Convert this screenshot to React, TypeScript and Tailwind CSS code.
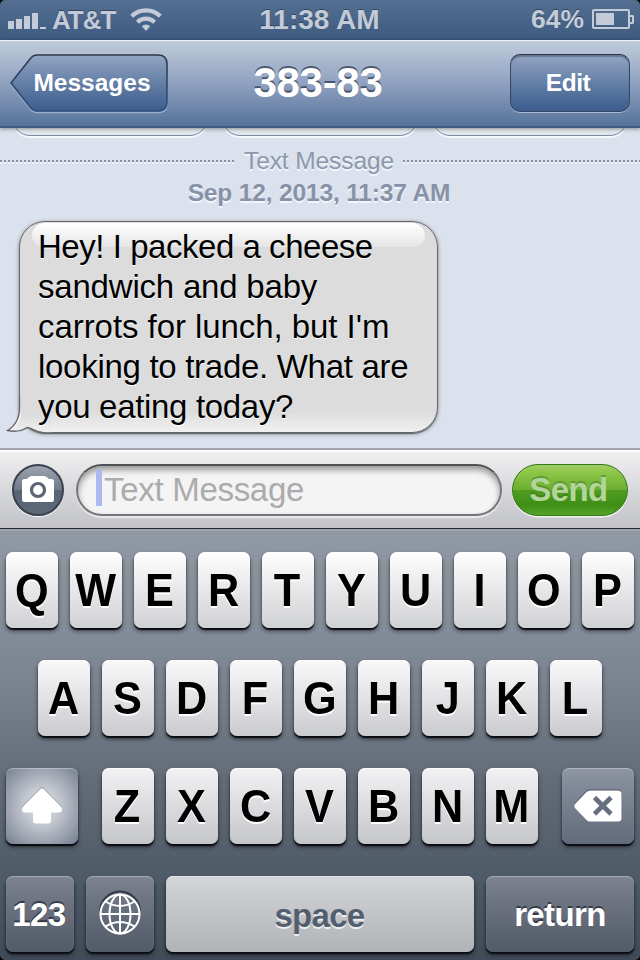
import React from "react";
import clsx from "clsx";

const lightKey =
  "h-[76px] w-[52px] rounded-[7px] flex items-center justify-center pr-px font-bold text-[46px] leading-none text-black [text-shadow:0_2px_0_#fff] shadow-[0_2px_1px_#0a0c10,0_3px_4px_rgba(0,0,0,0.55),inset_0_1px_0_rgba(255,255,255,0.7)] bg-linear-to-b";

const darkKey =
  "h-[76px] rounded-[7px] flex items-center justify-center font-bold text-[33px] tracking-[-0.6px] leading-none text-white [text-shadow:0_-2px_0_rgba(30,35,45,0.7)] shadow-[0_2px_1px_#0a0c10,0_3px_4px_rgba(0,0,0,0.55),inset_0_1px_1px_rgba(255,255,255,0.35)] bg-linear-to-b";

const Letters = ({ letters, tone }: { letters: string; tone: string }) => (
  <>
    {letters.split("").map((letter) => (
      <button key={letter} className={clsx(lightKey, tone)}>
        <span className="scale-x-[0.94]">{letter}</span>
      </button>
    ))}
  </>
);

const StatusBar = () => {
  return (
    <div className="h-10 flex items-center justify-between bg-linear-to-b from-[#546f91] to-[#3d5a80] text-[#c2cbd7] font-bold px-[6px] pl-2 [text-shadow:0_-1px_0_rgba(30,45,70,0.6)]">
      <div className="w-[220px] flex items-center">
        <div className="flex items-end gap-[2px] h-4 mt-[2px]">
          <span className="w-[6px] h-2 bg-[#c2cbd7]" />
          <span className="w-[6px] h-[10px] bg-[#c2cbd7]" />
          <span className="w-[6px] h-[13px] bg-[#c2cbd7]" />
          <span className="w-[6px] h-4 bg-[#c2cbd7]" />
          <span className="w-[6px] h-[2px] bg-[#c2cbd7]" />
        </div>
        <span className="ml-[6px] w-[63px] text-[26px] tracking-[-1px] whitespace-nowrap">AT&amp;T</span>
        <svg className="ml-[15px] mt-[-2px]" width="32" height="24" viewBox="0 0 32 24" fill="none" stroke="#c2cbd7" strokeWidth="4.2">
          <path d="M1.7 9.2a20.5 20.5 0 0 1 28.6 0" />
          <path d="M7.4 15.2a12.3 12.3 0 0 1 17.2 0" />
          <path d="M16 24l-4.2-4.8a6.2 6.2 0 0 1 8.4 0z" fill="#c2cbd7" stroke="none" />
        </svg>
      </div>
      <span className="ml-[-3px] text-[28px] whitespace-nowrap">11:38 AM</span>
      <div className="w-[220px] flex items-center justify-end">
        <span className="text-[26.5px] mr-[8px]">64%</span>
        <div className="w-[38px] h-5 border-2 border-[#c2cbd7] rounded-[2px] p-[2px] mt-[-2px]">
          <div className="w-[18px] h-3 bg-[#c2cbd7]" />
        </div>
        <div className="w-1 h-[9px] border-2 border-l-0 border-[#c2cbd7] rounded-r-[2px] mt-[-2px]" />
      </div>
    </div>
  );
};

const NavBar = () => {
  return (
    <div className="relative z-10 h-[88px] flex items-center justify-between pl-[10px] pr-[10px] pb-[2px] bg-linear-to-b from-[#c0ccdc] via-[#8fa1bf] to-[#56739a] border-t border-t-[#eef2f7] border-b-2 border-b-[#3c5a84] shadow-[0_1px_4px_rgba(0,0,0,0.4)] text-white font-bold [text-shadow:0_-2px_0_rgba(50,60,80,0.75)]">
      <button className="relative w-[158px] h-[58px] pl-[6px] pt-[2px] flex items-center justify-center text-[24.5px]">
        <svg className="absolute inset-0 overflow-visible" width="158" height="58" viewBox="0 0 158 58">
          <defs>
            <linearGradient id="back" x1="0" y1="0" x2="0" y2="1">
              <stop offset="0" stopColor="#93a5c2" />
              <stop offset="0.5" stopColor="#647fa7" />
              <stop offset="1" stopColor="#3b5c8d" />
            </linearGradient>
            <linearGradient id="backEdge" x1="0" y1="0" x2="0" y2="1">
              <stop offset="0" stopColor="#30394b" />
              <stop offset="1" stopColor="#304e7d" />
            </linearGradient>
          </defs>
          <path
            d="M27 1H148Q157 1 157 10V48Q157 57 148 57H27Q23 57 20 53L1 29L20 5Q23 1 27 1Z"
            fill="none"
            stroke="#a9bbd3"
            strokeOpacity="0.8"
            strokeWidth="1.5"
            transform="translate(0 1.5)"
          />
          <path
            d="M27 1H148Q157 1 157 10V48Q157 57 148 57H27Q23 57 20 53L1 29L20 5Q23 1 27 1Z"
            fill="url(#back)"
            stroke="url(#backEdge)"
            strokeWidth="1.6"
          />
        </svg>
        <span className="relative">Messages</span>
      </button>
      <h1 className="text-[42px] tracking-[-0.3px] leading-none ml-[-42px]">383-83</h1>
      <button className="w-[120px] h-[58px] pr-1 pt-[2px] rounded-[10px] border border-[#34496b] border-t-[#2e384a] bg-linear-to-b from-[#93a5c2] via-[#647fa7] to-[#3b5c8d] shadow-[0_1px_0_#a9bbd3,inset_0_2px_1px_rgba(40,50,70,0.4)] text-[24.5px] tracking-[-0.5px]">
        Edit
      </button>
    </div>
  );
};

const dots =
  "h-1 mt-[2px] bg-[linear-gradient(#828ca3_0_50%,#f2f5fa_50%)] [mask-image:repeating-linear-gradient(90deg,#000_0_2px,transparent_2px_4px)]";

const Conversation = () => {
  return (
    <div className="relative h-80 bg-[#dbe1ed] overflow-hidden">
      <div className="flex gap-[14px] pl-3 h-[17px]">
        {[0, 1, 2].map((item) => (
          <div
            key={item}
            className="shrink-0 mt-[-28px] w-[196px] h-9 rounded-[20px] border border-[#7b899f] bg-[#e4e8ee] shadow-[0_2px_0_#f4f7fb]"
          />
        ))}
      </div>
      <div className="h-8 flex items-center text-[24.5px] text-[#8d97ab] [text-shadow:0_2px_0_#f2f5fa]">
        <div className={clsx("w-[235px]", dots)} />
        <span className="w-[168px] text-center whitespace-nowrap tracking-[-0.1px]">Text Message</span>
        <div className={clsx("flex-1", dots)} />
      </div>
      <p className="h-8 pr-[2px] leading-8 text-center text-[24.5px] tracking-[-0.15px] font-bold text-[#8792a7] [text-shadow:0_2px_0_#f2f5fa]">
        Sep 12, 2013, 11:37 AM
      </p>
      <div className="relative ml-[19px] mt-3 w-[419px] h-[212px] rounded-[26px] border border-[#66676a] bg-[linear-gradient(#dcdcdc_0_90%,#f1f1f1)] shadow-[0_1px_1px_rgba(60,60,65,0.7),0_1px_4px_rgba(0,0,0,0.35)]">
        <div className="absolute left-3 right-3 top-px h-6 rounded-t-[16px] rounded-b-[14px] bg-linear-to-b from-white to-[#e5e5e5]" />
        <svg className="absolute left-[-15px] top-[171px]" width="46" height="42" viewBox="0 0 46 42">
          <defs>
            <linearGradient id="tail" x1="0" y1="0" x2="0" y2="1">
              <stop offset="0.5" stopColor="#dcdcdc" />
              <stop offset="1" stopColor="#f1f1f1" />
            </linearGradient>
          </defs>
          <path d="M14.500 4V14C14.500 26 10 33 2.500 37.500C10 39 17 38 22 34.500C28 35 30 39.800 40 39.800H46V4Z" fill="url(#tail)" />
          <path d="M6 36.500C12 33 15 28 16 20" fill="none" stroke="#f5f5f5" strokeOpacity="0.8" strokeWidth="1.500" />
          <path
            d="M14.500 4V14C14.500 26 10 33 2.500 37.500C10 39 17 38 22 34.500C28 35 30 39.700 40 39.800H46"
            fill="none"
            stroke="#66676a"
            strokeWidth="1.300"
          />
        </svg>
        <p className="relative pl-[18px] pt-[5px] text-[33px] leading-10 text-black [text-shadow:0_1px_0_#fff] whitespace-nowrap">
          <span className="tracking-[-0.46px]">Hey! I packed a cheese</span>
          <br />
          <span className="tracking-[-0.2px]">sandwich and baby</span>
          <br />
          <span className="tracking-[-0.06px]">carrots for lunch, but I'm</span>
          <br />
          <span className="tracking-[-0.29px]">looking to trade. What are</span>
          <br />
          <span className="tracking-[-0.32px]">you eating today?</span>
        </p>
      </div>
    </div>
  );
};

const Composer = () => {
  return (
    <div className="relative h-[81px] flex items-start pt-[13px] px-3 bg-linear-to-b from-[#f0f0f1] to-[#c2c3c8] border-t-2 border-t-[#a4a7ae] border-b border-b-[#26292e] shadow-[inset_0_2px_0_#fff]">
      <button className="mt-px w-[52px] h-[52px] rounded-full border-2 border-[#39424e] bg-[linear-gradient(#9ba3af_0%,#707b89_50%,#596574_50%,#5b6877_100%)] shadow-[0_1px_1px_#fff]">
        <svg className="m-[-2px]" width="52" height="52" viewBox="0 0 52 52">
          <path
            d="M12.500 15H14Q15.500 15 16.500 13.500Q18 12 20 12H32Q34 12 35.500 13.500Q36.500 15 38 15H39.500Q42 15 42 17.500V35.500Q42 38 39.500 38H12.500Q10 38 10 35.500V17.500Q10 15 12.500 15Z"
            fill="#fff"
          />
          <circle cx="26" cy="26" r="6.500" fill="#fff" stroke="#5b6675" strokeWidth="3.200" />
        </svg>
      </button>
      <div className="ml-3 mt-px w-[426px] h-[52px] rounded-full border-2 border-[#747578] border-t-[#505154] bg-[#f4f4f4] shadow-[0_2px_1px_#ebebec,inset_0_4px_6px_rgba(0,0,0,0.38)] flex items-center pl-[18px] pb-1">
        <span className="w-[6px] h-9 bg-[#adbaf1]" />
        <span className="pl-[2px] mt-[2px] text-[33px] leading-none tracking-[-0.3px] text-[#ababab]">Text Message</span>
      </div>
      <button className="ml-[10px] mt-px w-[116px] h-[52px] pr-[3px] pb-[2px] rounded-full border-[1.5px] border-[#327a17] bg-[linear-gradient(#a0cb66_0%,#8cc647_15%,#6cae32_49%,#509d20_50%,#3f8e15_80%,#57a32b_100%)] shadow-[0_1.5px_0_#f3f3f3] font-bold text-[33px] tracking-[-0.6px] leading-none text-[#b2d59c] [text-shadow:0_-2px_0_rgba(60,110,30,0.45)]">
        Send
      </button>
    </div>
  );
};

const Keyboard = () => {
  return (
    <div className="h-[431px] px-[6px] pt-[23px] flex flex-col gap-8 bg-[linear-gradient(#9199a5,#7c8491_35%,#68727e_52%,#525d6a_77%,#404b5a)] shadow-[inset_0_2px_0_#9ea5b0]">
      <div className="flex gap-3">
        <Letters letters="QWERTYUIOP" tone="from-[#fefefe] to-[#d0d1d4]" />
      </div>
      <div className="flex gap-3 justify-center">
        <Letters letters="ASDFGHJKL" tone="from-[#f9f9fa] to-[#cbccd0]" />
      </div>
      <div className="flex justify-between">
        <button className="w-[72px] h-[76px] rounded-[7px] flex items-center justify-center bg-[radial-gradient(ellipse_at_center,#e4e6ea_0%,#c3c7cf_35%,#9aa0ad_70%,#747d8e_100%)] shadow-[0_2px_1px_#0a0c10,0_3px_4px_rgba(0,0,0,0.55),inset_0_1px_1px_rgba(255,255,255,0.35)]">
          <svg width="42" height="38" viewBox="0 0 42 38">
            <path
              d="M19.300 2Q21 .300 22.700 2L39.500 19Q41 20.500 41 22.500Q41 25.500 38 25.500H30V33.500Q30 36.500 27 36.500H15Q12 36.500 12 33.500V25.500H4Q1 25.500 1 22.500Q1 20.500 2.500 19Z"
              fill="#fff"
              className="drop-shadow-[0_-1px_0_rgba(90,95,110,0.5)]"
            />
          </svg>
        </button>
        <div className="flex gap-3">
          <Letters letters="ZXCVBNM" tone="from-[#f2f2f4] to-[#c5c6ca]" />
        </div>
        <button className={clsx(darkKey, "w-[72px] from-[#8d94a2] to-[#626b7b]")}>
          <svg width="50" height="36" viewBox="0 0 50 36">
            <path
              d="M17 2.500H45Q48.500 2.500 48.500 6V30Q48.500 33.500 45 33.500H17Q15 33.500 13.500 32L2 20Q.500 18 2 16L13.500 4Q15 2.500 17 2.500Z"
              fill="#fff"
              className="drop-shadow-[0_-1px_0_rgba(50,55,70,0.7)]"
            />
            <path d="M21.500 9.500L38 26M38 9.500L21.500 26" stroke="#666e7f" strokeWidth="4.600" />
          </svg>
        </button>
      </div>
      <div className="flex gap-3">
        <button className={clsx(darkKey, "w-[68px] from-[#7c828e] to-[#525967]")}>
          <span className="ml-[-2px]">123</span>
        </button>
        <button className={clsx(darkKey, "w-[68px] from-[#7c828e] to-[#525967]")}>
          <svg className="overflow-visible" width="42" height="42" viewBox="0 0 42 42" fill="none" strokeWidth="2">
            <path d="M1 18.500A20 20 0 0 1 41 18.500" stroke="#343b48" />
            <g stroke="#fff">
              <circle cx="21" cy="21" r="19.500" />
              <ellipse cx="21" cy="21" rx="10.500" ry="19.500" />
              <path d="M21 1V41M1 21H41M6.500 8.500Q21 17.500 35.500 8.500M6.500 33.500Q21 24.500 35.500 33.500" />
            </g>
          </svg>
        </button>
        <button className="w-[308px] h-[76px] rounded-[7px] pt-[2px] pr-px bg-linear-to-b from-[#d3d6d8] to-[#b1b2b6] shadow-[0_2px_1px_#0a0c10,0_3px_4px_rgba(0,0,0,0.55),inset_0_1px_0_#e3e5e7] font-bold text-[33px] tracking-[-0.7px] leading-none text-[#535f6f] [text-shadow:0_2px_0_#eceef0]">
          space
        </button>
        <button className={clsx(darkKey, "w-[148px] from-[#7c828e] to-[#525967]")}>return</button>
      </div>
    </div>
  );
};

const App = () => {
  return (
    <div className="w-[640px] h-[960px] bg-black">
      <div className="h-full overflow-hidden rounded-[5px] font-['Liberation_Sans',Arial,sans-serif]">
        <StatusBar />
        <NavBar />
        <Conversation />
        <Composer />
        <Keyboard />
      </div>
    </div>
  );
};

export default App;
